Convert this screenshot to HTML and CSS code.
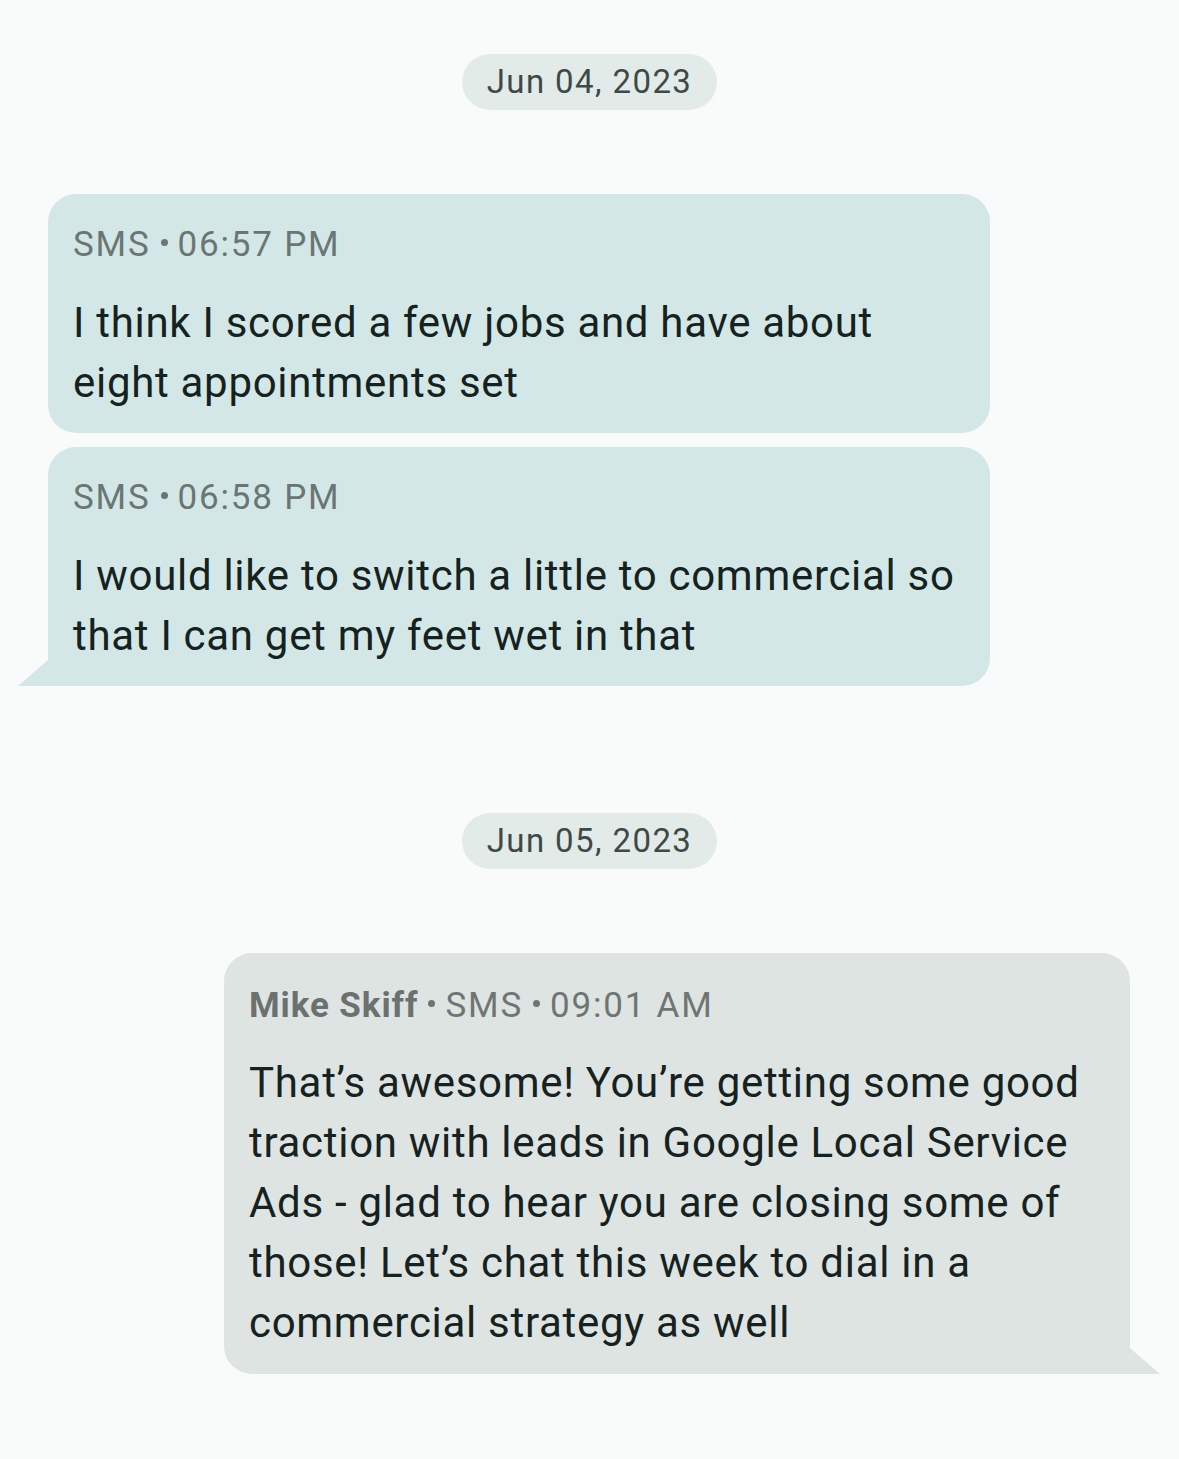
FILE: index.html
```html
<!DOCTYPE html>
<html lang="en">
<head>
<meta charset="utf-8">
<title>Messages</title>
<link rel="stylesheet" href="styles.css">
</head>
<body>
<main class="thread">
  <div class="date-row"><span class="date-pill">Jun 04, 2023</span></div>

  <div class="group group-in">
    <div class="bubble bubble-in">
      <div class="meta">SMS<span class="dot"></span>06:57 PM</div>
      <p class="text">I think I scored a few jobs and have about eight appointments set</p>
    </div>
    <div class="bubble bubble-in tail-left">
      <div class="meta">SMS<span class="dot"></span>06:58 PM</div>
      <p class="text">I would like to switch a little to commercial so that I can get my feet wet in that</p>
    </div>
  </div>

  <div class="date-row date-row-2"><span class="date-pill">Jun 05, 2023</span></div>

  <div class="group group-out">
    <div class="bubble bubble-out tail-right">
      <div class="meta"><span class="sender">Mike Skiff</span><span class="dot"></span>SMS<span class="dot"></span>09:01 AM</div>
      <p class="text">That’s awesome! You’re getting some good traction with leads in Google Local Service Ads - glad to hear you are closing some of those! Let’s chat this week to dial in a commercial strategy as well</p>
    </div>
  </div>
</main>
</body>
</html>
```

FILE: styles.css
```css
html, body {
  margin: 0;
  padding: 0;
  background: #f9fbfa;
}
body {
  font-family: Roboto, "Noto Sans", "Liberation Sans", sans-serif;
  width: 1179px;
  height: 1459px;
  overflow: hidden;
}
.thread {
  display: flex;
  flex-direction: column;
  padding-top: 54px;
}
.date-row {
  display: flex;
  justify-content: center;
}
.date-row-2 {
  margin-top: 127px;
}
.date-pill {
  display: inline-block;
  height: 56px;
  line-height: 56px;
  padding: 0 25px;
  border-radius: 28px;
  background: #e3ebe9;
  color: #3e4a47;
  font-size: 33px;
  letter-spacing: 1.4px;
}
.group {
  display: flex;
  flex-direction: column;
  gap: 14px;
  margin-top: 84px;
}
.group-in {
  align-items: flex-start;
  padding-left: 48px;
}
.group-out {
  align-items: flex-end;
  padding-right: 49px;
}
.bubble {
  position: relative;
  box-sizing: border-box;
  border-radius: 28px;
  padding: 31px 25px 20px 25px;
}
.bubble-in {
  width: 942px;
  background: #d3e8e6;
}
.bubble-out {
  width: 906px;
  padding-top: 33px;
  padding-bottom: 21px;
  background: #dee4e2;
}
.meta {
  font-size: 35px;
  line-height: 40px;
  letter-spacing: 1.8px;
  color: #6b7674;
  white-space: nowrap;
}
.bubble-out .meta {
  color: #6e7573;
}
.sender {
  font-weight: 700;
  letter-spacing: 0.9px;
  color: #6b716f;
}
.dot {
  display: inline-block;
  width: 7px;
  height: 7px;
  border-radius: 50%;
  background: currentColor;
  margin: 0 10px 0 10px;
  vertical-align: 10px;
}
.text {
  margin: 28px 0 0;
  font-size: 42px;
  line-height: 60px;
  letter-spacing: 0.7px;
  color: #15221f;
}
.bubble-out .text {
  margin-top: 27px;
}
.tail-left {
  border-bottom-left-radius: 0;
}
.tail-left::after {
  content: "";
  position: absolute;
  left: -30px;
  bottom: 0;
  width: 30px;
  height: 26px;
  background: #d3e8e6;
  clip-path: polygon(100% 0, 100% 100%, 0 100%);
}
.tail-right {
  border-bottom-right-radius: 0;
}
.tail-right::after {
  content: "";
  position: absolute;
  right: -30px;
  bottom: 0;
  width: 30px;
  height: 26px;
  background: #dee4e2;
  clip-path: polygon(0 0, 100% 100%, 0 100%);
}
```
